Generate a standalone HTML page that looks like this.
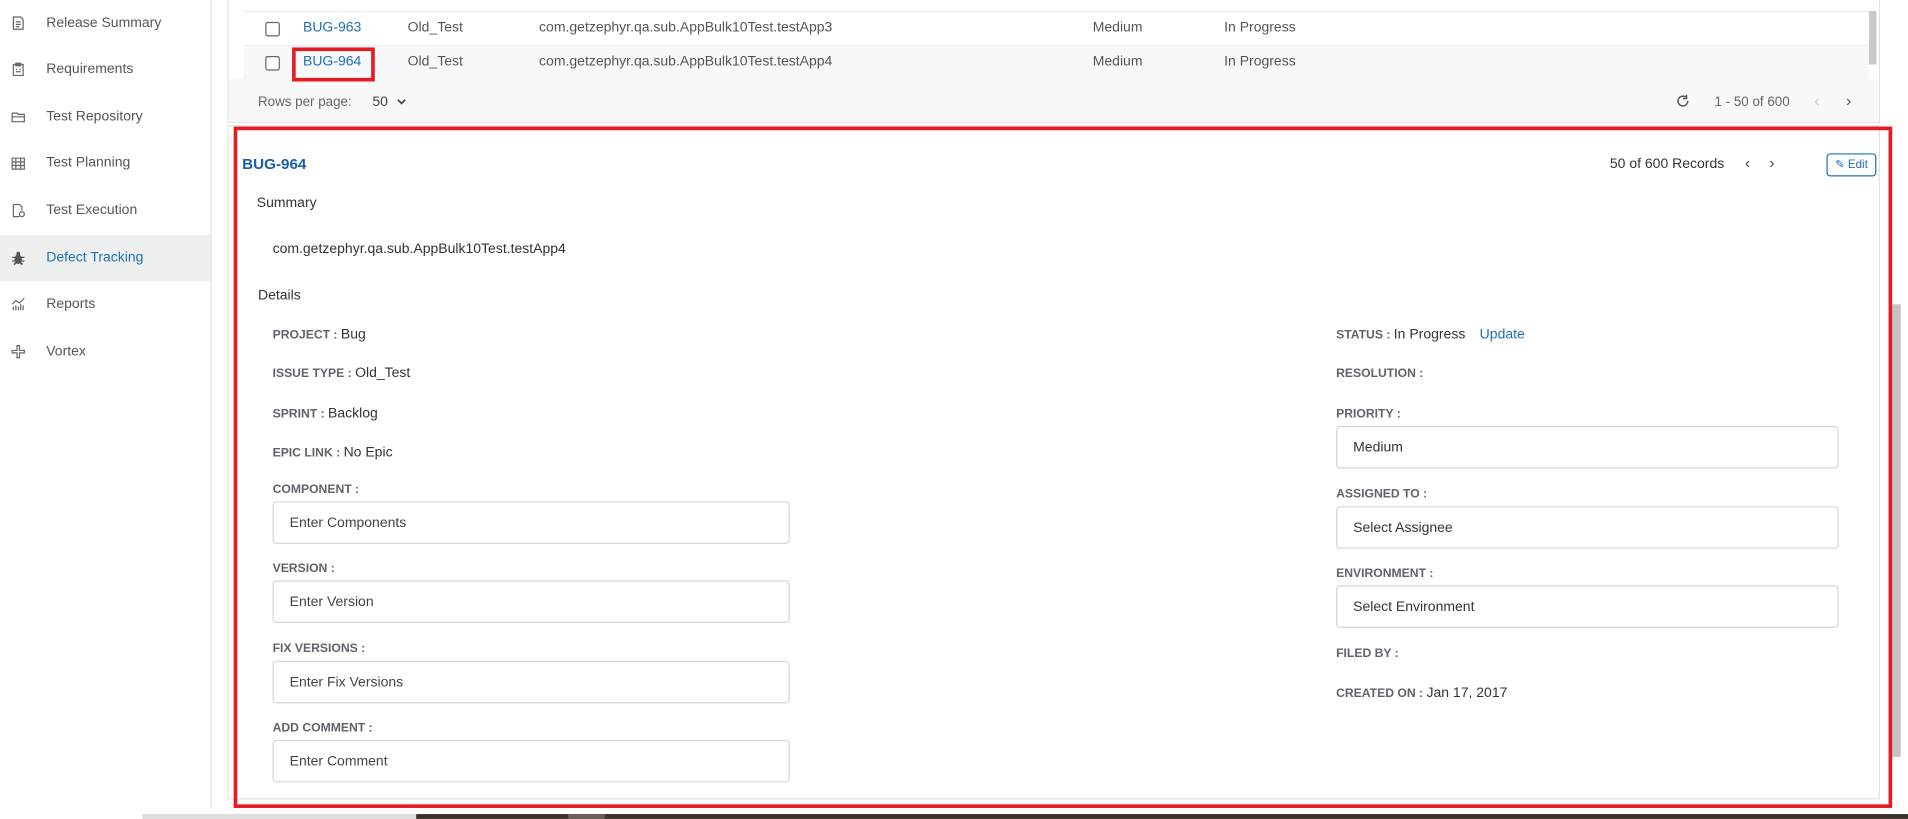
<!DOCTYPE html>
<html><head><meta charset="utf-8">
<style>
html,body{margin:0;padding:0;width:1908px;height:819px;overflow:hidden;background:#fff;}
#w{position:absolute;left:0;top:0;width:1568px;height:673px;transform:scale(1.21684);transform-origin:0 0;font-family:"Liberation Sans",sans-serif;color:#333;font-size:11.5px;background:#fff;}
.a{position:absolute;white-space:nowrap;line-height:18px;}
.side{position:absolute;left:0;top:0;width:173px;height:673px;background:#fff;border-right:1px solid #e3e3e3;}
.nav{position:absolute;left:38px;color:#555;font-size:11.5px;transform:translateY(-50%);}
.ic{position:absolute;left:9px;width:12px;height:12px;transform:translateY(-50%);}
.lbl{font-weight:bold;color:#5f646b;font-size:10px;}
.val{color:#333;font-size:11.5px;}
.inp{position:absolute;border:1px solid #d5d5d5;border-radius:3px;background:#fff;box-sizing:border-box;padding-left:13px;color:#444;font-size:11.5px;}
.cb{position:absolute;left:218px;width:10px;height:10px;border:1px solid #666;border-radius:2px;background:#fff;}
.red{position:absolute;border:3px solid #e51b24;box-sizing:border-box;}
</style></head><body><div id="w">
<div class="side">
<svg class="ic" style="top:19px" viewBox="0 0 12 12" fill="none" stroke="#666" stroke-width="1"><path d="M2 1h6l2 2v8H2z M4 5h4M4 7h4M4 9h3"/></svg>
<div class="nav" style="top:19px">Release Summary</div>
<svg class="ic" style="top:57px" viewBox="0 0 12 12" fill="none" stroke="#666" stroke-width="1"><path d="M2 2h8v9H2z M4 1h4v2H4z M4 6h1M7 6h1M4 8h4"/></svg>
<div class="nav" style="top:57px">Requirements</div>
<svg class="ic" style="top:96px" viewBox="0 0 12 12" fill="none" stroke="#666" stroke-width="1"><path d="M1 3h4l1 1h5v6H1z M1 6h10"/></svg>
<div class="nav" style="top:96px">Test Repository</div>
<svg class="ic" style="top:134px" viewBox="0 0 12 12" fill="none" stroke="#666" stroke-width="1"><path d="M1 2h10v9H1z M1 5h10M1 8h10M4 2v9M8 2v9"/></svg>
<div class="nav" style="top:134px">Test Planning</div>
<svg class="ic" style="top:173px" viewBox="0 0 12 12" fill="none" stroke="#666" stroke-width="1"><path d="M2 1h5l2 2v3 M2 1v10h5"/><circle cx="9" cy="9" r="2"/></svg>
<div class="nav" style="top:173px">Test Execution</div>
<div class="a" style="left:0;top:193px;width:173px;height:38px;background:#eef0f0"></div>
<svg class="ic" style="top:212px" viewBox="0 0 12 12" fill="#555"><ellipse cx="6" cy="7" rx="3" ry="4"/><circle cx="6" cy="2.5" r="1.6"/><path d="M1 5h10v1H1zM1 8h10v1H1zM2 11l2-2 1 1-2 2zM10 11l-2-2-1 1 2 2z"/></svg>
<div class="nav" style="top:212px;color:#1f6fb5">Defect Tracking</div>
<svg class="ic" style="top:250px" viewBox="0 0 12 12" fill="none" stroke="#666" stroke-width="1"><path d="M1 6l3-3 3 2 4-4 M2 11V8M4 11V7M6 11V8M8 11V6M10 11V7"/></svg>
<div class="nav" style="top:250px">Reports</div>
<svg class="ic" style="top:289px" viewBox="0 0 12 12" fill="none" stroke="#666" stroke-width="1"><path d="M5 1h2v4h4v2H7v4H5V7H1V5h4z"/></svg>
<div class="nav" style="top:289px">Vortex</div>
</div>

<!-- table card -->
<div class="a" style="left:187px;top:0;width:1358px;height:101px;background:#fff;border:1px solid #e3e3e3;border-top:none;box-sizing:border-box"></div>
<div class="a" style="left:200px;top:9px;width:1336px;height:1px;background:#eee"></div>
<div class="a" style="left:200px;top:37px;width:1336px;height:28px;background:#f6f9fc;border-top:1px solid #eef1f3"></div>
<div class="a" style="left:188px;top:65px;width:1356px;height:35px;background:#f8f8f8"></div>
<div class="a" style="left:1536px;top:9px;width:6px;height:44px;background:#c8c8c8"></div>
<div class="cb" style="top:18px"></div><div class="cb" style="top:46px"></div>
<div class="a" style="left:249px;top:14px;color:#1f6fb5">BUG-963</div>
<div class="a" style="left:335px;top:14px;color:#555">Old_Test</div>
<div class="a" style="left:443px;top:14px;color:#555">com.getzephyr.qa.sub.AppBulk10Test.testApp3</div>
<div class="a" style="left:898px;top:14px;color:#555">Medium</div>
<div class="a" style="left:1006px;top:14px;color:#555">In Progress</div>
<div class="a" style="left:249px;top:42px;color:#1f6fb5">BUG-964</div>
<div class="a" style="left:335px;top:42px;color:#555">Old_Test</div>
<div class="a" style="left:443px;top:42px;color:#555">com.getzephyr.qa.sub.AppBulk10Test.testApp4</div>
<div class="a" style="left:898px;top:42px;color:#555">Medium</div>
<div class="a" style="left:1006px;top:42px;color:#555">In Progress</div>
<div class="red" style="left:240px;top:39px;width:68px;height:28px"></div>
<div class="a" style="left:212px;top:75px;color:#666;font-size:11px">Rows per page:</div>
<div class="a" style="left:306px;top:75px;color:#444;font-size:11.5px">50</div>
<svg class="a" style="left:326px;top:81px" width="8" height="6" viewBox="0 0 8 6"><path d="M1 1l3 3 3-3" stroke="#444" stroke-width="1.4" fill="none"/></svg>
<svg class="a" style="left:1377px;top:77px" width="12" height="12" viewBox="0 0 12 12"><path d="M10 6a4 4 0 1 1-1.5-3.1" stroke="#555" stroke-width="1.2" fill="none"/><path d="M9 1v3H6" stroke="#555" stroke-width="1.2" fill="none"/></svg>
<div class="a" style="left:1409px;top:75px;color:#666;font-size:11px">1 - 50 of 600</div>
<div class="a" style="left:1491px;top:74px;color:#ccc;font-size:13px">‹</div>
<div class="a" style="left:1517px;top:74px;color:#555;font-size:13px">›</div>

<!-- detail card -->
<div class="a" style="left:187px;top:103px;width:1358px;height:554px;background:#fff;border:1px solid #e3e3e3;box-sizing:border-box"></div>
<div class="a" style="left:1554px;top:250px;width:8px;height:372px;background:#c4c4c4"></div>
<div class="a" style="left:199px;top:126px;color:#1a5fa0;font-weight:bold;font-size:12.5px">BUG-964</div>
<div class="a" style="left:1323px;top:126px;color:#333;font-size:11.5px">50 of 600 Records</div>
<div class="a" style="left:1434px;top:125px;color:#444;font-size:13px">‹</div>
<div class="a" style="left:1454px;top:125px;color:#444;font-size:13px">›</div>
<div class="a" style="left:1501px;top:126px;width:41px;height:19px;border:1px solid #1f6fb5;border-radius:3px;box-sizing:border-box;color:#1f6fb5;font-size:9.5px;line-height:17px;text-align:center">✎ Edit</div>
<div class="a" style="left:211px;top:158px;font-size:11.5px">Summary</div>
<div class="a" style="left:224px;top:196px;font-size:11.5px">com.getzephyr.qa.sub.AppBulk10Test.testApp4</div>
<div class="a" style="left:212px;top:234px;font-size:11.5px">Details</div>

<div class="a" style="left:224px;top:266px"><span class="lbl">PROJECT : </span><span class="val">Bug</span></div>
<div class="a" style="left:224px;top:298px"><span class="lbl">ISSUE TYPE : </span><span class="val">Old_Test</span></div>
<div class="a" style="left:224px;top:331px"><span class="lbl">SPRINT : </span><span class="val">Backlog</span></div>
<div class="a" style="left:224px;top:363px"><span class="lbl">EPIC LINK : </span><span class="val">No Epic</span></div>
<div class="a lbl" style="left:224px;top:394px">COMPONENT :</div>
<div class="inp" style="left:224px;top:412px;width:425px;height:35px;line-height:34px">Enter Components</div>
<div class="a lbl" style="left:224px;top:459px">VERSION :</div>
<div class="inp" style="left:224px;top:477px;width:425px;height:35px;line-height:34px">Enter Version</div>
<div class="a lbl" style="left:224px;top:525px">FIX VERSIONS :</div>
<div class="inp" style="left:224px;top:543px;width:425px;height:35px;line-height:34px">Enter Fix Versions</div>
<div class="a lbl" style="left:224px;top:590px">ADD COMMENT :</div>
<div class="inp" style="left:224px;top:608px;width:425px;height:35px;line-height:34px">Enter Comment</div>

<div class="a" style="left:1098px;top:266px"><span class="lbl">STATUS : </span><span class="val">In Progress</span></div>
<div class="a" style="left:1216px;top:266px;color:#1f6fb5">Update</div>
<div class="a lbl" style="left:1098px;top:299px">RESOLUTION :</div>
<div class="a lbl" style="left:1098px;top:332px">PRIORITY :</div>
<div class="inp" style="left:1098px;top:350px;width:413px;height:35px;line-height:34px;color:#333">Medium</div>
<div class="a lbl" style="left:1098px;top:398px">ASSIGNED TO :</div>
<div class="inp" style="left:1098px;top:416px;width:413px;height:35px;line-height:34px;color:#333">Select Assignee</div>
<div class="a lbl" style="left:1098px;top:463px">ENVIRONMENT :</div>
<div class="inp" style="left:1098px;top:481px;width:413px;height:35px;line-height:34px;color:#333">Select Environment</div>
<div class="a lbl" style="left:1098px;top:529px">FILED BY :</div>
<div class="a" style="left:1098px;top:561px"><span class="lbl">CREATED ON : </span><span class="val">Jan 17, 2017</span></div>

<div class="red" style="left:192px;top:104px;width:1363px;height:560px"></div>

<div class="a" style="left:0;top:664px;width:1568px;height:9px;background:#fff"></div>
<div class="a" style="left:117px;top:669px;width:225px;height:4px;background:#ddd"></div>
<div class="a" style="left:342px;top:669px;width:1226px;height:4px;background:#3a3129"></div>
<div class="a" style="left:467px;top:669px;width:30px;height:4px;background:#6a625a"></div>
</div></body></html>
